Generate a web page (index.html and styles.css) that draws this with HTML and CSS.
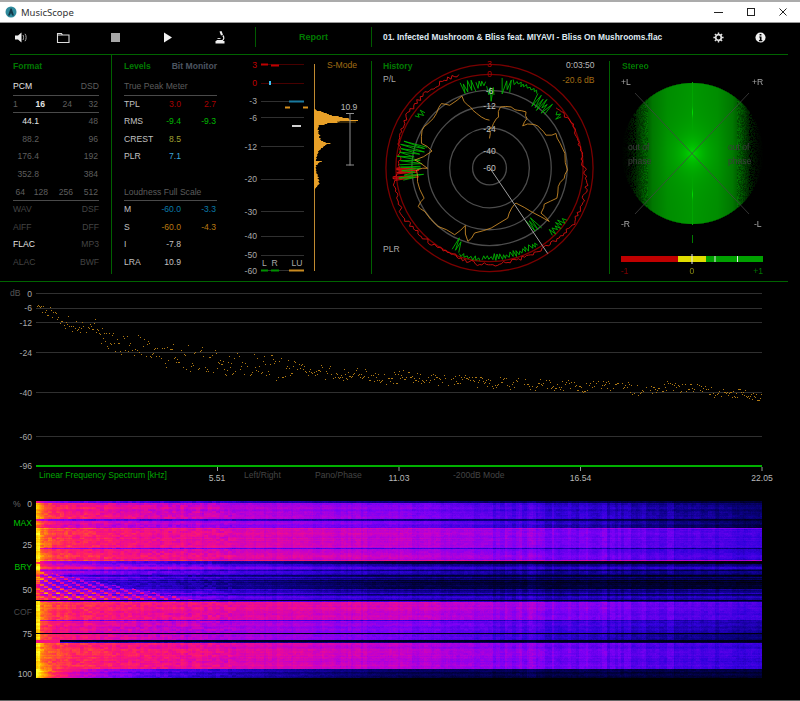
FILE: index.html
```html
<!DOCTYPE html>
<html lang="en">
<head>
<meta charset="utf-8">
<title>MusicScope</title>
<link rel="stylesheet" href="styles.css">
</head>
<body>
<div class="window">
  <header class="titlebar">
    <svg class="app-icon" viewBox="0 0 12 12"><circle cx="6" cy="6" r="5.5" fill="#2f8a9c"/><path d="M3 9.5 5.5 2.5h1.2L9 9.5H7.2L6 7 4.8 9.5z" fill="#123a4a"/></svg>
    <span class="app-name">MusicScope</span>
    <div class="win-controls">
      <svg class="win-btn" viewBox="0 0 32 20"><path d="M11 10.500h9" stroke="#222" fill="none"/></svg>
      <svg class="win-btn" viewBox="0 0 32 20"><rect x="12.500" y="6.500" width="7" height="7" stroke="#222" fill="none"/></svg>
      <svg class="win-btn" viewBox="0 0 32 20"><path d="M12.500 6.500l7 7M19.500 6.500l-7 7" stroke="#222" fill="none"/></svg>
    </div>
  </header>

  <nav class="toolbar">
    <div class="tool t-speaker"><svg class="icon" viewBox="0 0 14 13"><path d="M1 4.500h3l3.500-3v10L4 8.500H1z" fill="#eee"/><path d="M9 4c.8 1.400.8 3.600 0 5M11 2.800c1.500 2 1.500 5.400 0 7.400" stroke="#aaa" fill="none"/></svg></div>
    <div class="tool t-folder"><svg class="icon" viewBox="0 0 14 13"><path d="M1.500 11.500v-9h4l1 1.500h6.500v7.500z M1.500 4h12" stroke="#ddd" fill="none" stroke-width="1.100"/></svg></div>
    <div class="tool t-stop"><span class="stop-square"></span></div>
    <div class="tool t-play"><svg class="icon" viewBox="0 0 14 13"><path d="M3 1.500l8 5-8 5z" fill="#f2f2f2"/></svg></div>
    <div class="tool t-micro"><svg class="icon" viewBox="0 0 14 13"><path d="M6.500.5l2-.5 1.500 3.800-2 .8z" fill="#eee"/><path d="M9.800 4.500c1.600 1.800 1.200 4-.3 5H3.500" stroke="#eee" fill="none" stroke-width="1.200"/><path d="M2.500 10h9v2.500h-9z" fill="#eee"/><path d="M4.500 7.500h3" stroke="#ccc"/></svg></div>
    <div class="tool t-report">Report</div>
    <div class="tool t-title">01. Infected Mushroom &amp; Bliss feat. MIYAVI - Bliss On Mushrooms.flac</div>
    <div class="tool t-gear"><svg class="icon-sm" viewBox="0 0 14 14"><circle cx="7" cy="7" r="3.600" fill="none" stroke="#ddd" stroke-width="2.200"/><path d="M7 .5v2.500M7 11v2.500M.5 7H3M11 7h2.500M2.400 2.400l1.800 1.800M9.800 9.800l1.800 1.800M11.600 2.400 9.800 4.200M4.200 9.800l-1.800 1.800" stroke="#ddd" stroke-width="1.800"/></svg></div>
    <div class="tool t-info"><svg class="icon-sm" viewBox="0 0 12 12"><circle cx="6" cy="6" r="5.500" fill="#f2f2f2"/><path d="M5 2.200h2v1.700H5zM4.600 5h2.500v3.800h.9V10H4.300V8.800h1V6.100h-.7z" fill="#000"/></svg></div>
  </nav>

  <section class="panels">
    <div class="format">
      <h2 class="head">Format</h2>
      <div class="row two rule"><span class="on">PCM</span><span class="dim">DSD</span></div>
      <div class="row bits rule"><span class="dim">1</span><span class="on b">16</span><span class="dim">24</span><span class="dim">32</span></div>
      <div class="row rate"><span class="on">44.1</span><span class="dim">48</span></div>
      <div class="row rate"><span class="dim">88.2</span><span class="dim">96</span></div>
      <div class="row rate"><span class="dim">176.4</span><span class="dim">192</span></div>
      <div class="row rate"><span class="dim">352.8</span><span class="dim">384</span></div>
      <div class="row dsd rule"><span class="dim">64</span><span class="dim">128</span><span class="dim">256</span><span class="dim">512</span></div>
      <div class="row two"><span class="off">WAV</span><span class="off">DSF</span></div>
      <div class="row two"><span class="off">AIFF</span><span class="off">DFF</span></div>
      <div class="row two"><span class="on">FLAC</span><span class="off">MP3</span></div>
      <div class="row two"><span class="off">ALAC</span><span class="off">BWF</span></div>
    </div>

    <div class="levels">
      <div class="head-row"><h2 class="head">Levels</h2><h2 class="head mute">Bit Monitor</h2></div>
      <div class="row sub rule">True Peak Meter</div>
      <div class="row val"><span class="lab">TPL</span><span class="red">3.0</span><span class="red">2.7</span></div>
      <div class="row val"><span class="lab">RMS</span><span class="green">-9.4</span><span class="green">-9.3</span></div>
      <div class="row val"><span class="lab">CREST</span><span class="olive">8.5</span><span></span></div>
      <div class="row val"><span class="lab">PLR</span><span class="sky">7.1</span><span></span></div>
      <div class="row val"></div>
      <div class="row sub rule">Loudness Full Scale</div>
      <div class="row val"><span class="lab">M</span><span class="teal">-60.0</span><span class="teal">-3.3</span></div>
      <div class="row val"><span class="lab">S</span><span class="amber">-60.0</span><span class="amber">-4.3</span></div>
      <div class="row val"><span class="lab">I</span><span class="lab">-7.8</span><span></span></div>
      <div class="row val"><span class="lab">LRA</span><span class="lab">10.9</span><span></span></div>
    </div>

    <svg class="meter" viewBox="217 55 154 225">
      <g class="grid">
        <path class="gline red-line" d="M261 64.500h43M261 83.500h43"/>
        <path class="gline" d="M261 101.500h43M261 117.500h43M261 146.500h43M261 179.500h43M261 211.500h43M261 236.500h43M261 255.500h43M261 270.500h43"/>
      </g>
      <g class="tick-labels">
        <text class="t-red" x="257" y="68">3</text><text class="t-red" x="257" y="86">0</text>
        <text x="257" y="104">-3</text><text x="257" y="121">-6</text><text x="257" y="150">-12</text>
        <text x="257" y="182">-20</text><text x="257" y="215">-30</text><text x="257" y="239">-40</text>
        <text x="257" y="258">-50</text><text x="257" y="274">-60</text>
      </g>
      <path class="seg" stroke="#c00000" d="M261 64.500h7M271 65.500h8"/>
      <rect x="269" y="81" width="2" height="4" fill="#40c0f0"/>
      <path class="seg" stroke="#1a7aa0" d="M289 101.500h15"/>
      <path class="seg" stroke="#d8901c" d="M285 107.500h5M303 107.500h5"/>
      <path class="seg" stroke="#d0d0d0" d="M292 126h9"/>
      <path class="seg" stroke="#009000" d="M261 270.500h7M271 270.500h8"/>
      <path class="seg" stroke="#c88a20" d="M289 270.500h15"/>
      <text class="m-txt" x="262" y="266">L</text><text class="m-txt" x="271.500" y="266">R</text><text class="m-txt" x="291.500" y="266">LU</text>
      <path class="axis" d="M314.500 64v207"/>
      <text class="smode" x="327" y="68">S-Mode</text>
      <polygon id="histogram" fill="#e8a028"/>
      <path class="hist-tip" d="M337 122h19"/>
      <path class="bracket" d="M350 113.500v52M346 113.500h8M346 165h8"/>
      <text class="m-val" x="349" y="110" text-anchor="middle">10.9</text>
    </svg>

    <svg class="history" viewBox="372 55 238 225">
      <g class="rings">
        <circle cx="490" cy="168" r="17"/><circle cx="490" cy="168" r="40"/><circle cx="490" cy="168" r="62"/><circle cx="490" cy="168" r="78"/>
      </g>
      <g class="rings red-rings">
        <circle cx="490" cy="168" r="94"/><circle cx="490" cy="168" r="104"/>
      </g>
      <path id="traceRed" class="trace" stroke="#d81010"/>
      <path id="traceGreen" class="trace" stroke="#00b400"/>
      <path id="traceOrange" class="trace" stroke="#c88a28"/>
      <path class="hand" d="M491 169 548.500 254"/>
      <g class="ring-labels" text-anchor="middle">
        <text class="t-red" x="490" y="67">3</text><text class="t-red" x="490" y="77">0</text>
        <text x="490" y="94">-6</text><text x="490" y="109">-12</text><text x="490" y="132">-24</text>
        <text x="490" y="154">-40</text><text x="490" y="171">-60</text>
      </g>
      <text class="svg-head" x="383" y="69">History</text>
      <text class="m-txt" x="383" y="82">P/L</text>
      <text class="m-txt" x="383" y="252">PLR</text>
      <text class="m-val" x="595.500" y="68" text-anchor="end">0:03:50</text>
      <text class="smode" x="595.500" y="83" text-anchor="end">-20.6 dB</text>
    </svg>

    <div class="stereo">
      <canvas id="vector" class="vector" width="150" height="150"></canvas>
      <svg class="stereo-over" viewBox="611 55 189 225">
        <path class="cross" d="M636 93 750 214M750 93 636 214"/>
        <text class="svg-head" x="623" y="69">Stereo</text>
        <text class="m-txt" x="622" y="85">+L</text><text class="m-txt" x="753" y="85">+R</text>
        <text class="m-txt" x="622" y="227">-R</text><text class="m-txt" x="755" y="227">-L</text>
        <text class="phase" x="629" y="150">out of</text><text class="phase" x="629" y="164">phase</text>
        <text class="phase" x="729" y="150">out of</text><text class="phase" x="729" y="164">phase</text>
        <path class="centre-mark" d="M693.500 235v8"/>
        <rect x="622" y="256" width="57" height="6" fill="#c00000"/>
        <rect x="679" y="256" width="28" height="6" fill="#e0dc00"/>
        <rect x="707" y="256" width="57" height="6" fill="#00a000"/>
        <path class="bar-tick" d="M693 254v10"/>
        <path class="bar-tick" d="M716 256v6M738.500 256v6"/>
        <text class="t-dred" x="622" y="274">-1</text>
        <text class="t-olive" x="693" y="274" text-anchor="middle">0</text>
        <text class="t-dgreen" x="764" y="274" text-anchor="end">+1</text>
      </svg>
    </div>
  </section>

  <section class="spectrum">
    <svg class="spectrum-plot" viewBox="0 282 800 214">
      <path class="gline" d="M36 293.500h726M36 308.500h726M36 322.500h726M36 352.500h726M36 392.500h726M36 436.500h726"/>
      <g class="tick-labels">
        <text x="32" y="297">0</text><text x="32" y="311">-6</text><text x="32" y="326">-12</text>
        <text x="32" y="356">-24</text><text x="32" y="396">-40</text><text x="32" y="440">-60</text><text x="32" y="469">-96</text>
      </g>
      <text class="m-dim" x="10" y="296">dB</text>
      <path id="dots" fill="#b07a14"/>
      <path class="base" d="M36 466h726"/>
      <path class="xtick" d="M217.500 467v4M399 467v4M580.500 467v4M762 467v4"/>
      <text class="spec-name" x="39" y="478">Linear Frequency Spectrum [kHz]</text>
      <text class="m-val" x="217" y="481" text-anchor="middle">5.51</text>
      <text class="m-val" x="399" y="481" text-anchor="middle">11.03</text>
      <text class="m-val" x="580.500" y="481" text-anchor="middle">16.54</text>
      <text class="m-val" x="762" y="481" text-anchor="middle">22.05</text>
      <text class="m-off" x="244" y="478">Left/Right</text>
      <text class="m-off" x="315" y="478">Pano/Phase</text>
      <text class="m-off" x="453" y="478">-200dB Mode</text>
    </svg>
  </section>

  <section class="sgram">
    <div class="sgram-axis">
      <div class="pct"><span class="pct-sign">%</span><span>0</span></div>
      <span class="ax-green">MAX</span>
      <span>25</span>
      <span class="ax-green">BRY</span>
      <span>50</span>
      <span class="ax-off">COF</span>
      <span>75</span>
      <span class="ax-last">100</span>
    </div>
    <canvas id="sgram" class="sgram-canvas" width="726" height="177"></canvas>
  </section>
  <div class="bottom-edge"></div>
</div>
<script src="app.js"></script>
</body>
</html>
```
FILE: styles.css
```css
* { box-sizing: border-box; }
html, body { margin: 0; padding: 0; background: #000; }
body { width: 800px; height: 701px; overflow: hidden; font: 8.600px/1 "Liberation Sans", Arial, sans-serif; color: #bbb; }
.window { display: flex; flex-direction: column; height: 701px; position: relative; }
h2 { margin: 0; font: inherit; }
svg text { font-size: 8.600px; }

.titlebar { height: 23px; flex: none; background: #fff; border-top: 2px solid #ababab; border-bottom: 1px solid #999; display: flex; align-items: center; padding-left: 5px; color: #333; font: 9.500px "Noto Sans", sans-serif; }
.app-icon { width: 12px; height: 12px; margin-right: 4px; }
.win-controls { margin-left: auto; display: flex; }
.win-btn { width: 32px; height: 20px; }
.win-btn:last-child { margin-right: 1px; }

.toolbar { height: 32px; flex: none; display: flex; align-items: center; position: relative; }
.toolbar::after { content: ""; position: absolute; left: 10px; right: 12px; bottom: 0; height: 1px; background: #006400; }
.tool { display: flex; align-items: center; justify-content: center; height: 20px; margin-bottom: 4px; flex: none; }
.icon { width: 14px; height: 13px; }
.icon-sm { width: 11px; height: 11px; }
.t-speaker { width: 41px; }
.t-folder { width: 44px; }
.t-stop { width: 60px; }
.stop-square { width: 9px; height: 9px; background: #a8a8a8; }
.t-play { width: 46px; }
.t-micro { width: 58px; }
.t-report { margin-left: 6px; width: 117px; border-left: 1px solid #005a00; border-right: 1px solid #005a00; color: #007a00; font-weight: 700; font-size: 9px; }
.t-title { justify-content: flex-start; width: 328px; padding-left: 11px; color: #dfe8f0; font-weight: 700; font-size: 8.400px; white-space: nowrap; }
.t-gear { width: 36px; }
.t-info { width: 48px; }

.panels { height: 227px; flex: none; display: flex; border-bottom: 1px solid #006400; margin: 0 12px 0 0; align-items: stretch; position: relative; }
.format { width: 111px; padding: 7px 12px 0 13px; margin-bottom: 7px; flex: none; }
.levels { width: 106px; padding: 7px 0 0 12px; margin-bottom: 7px; border-left: 1px solid #006000; flex: none; }
.head { color: #007a00; font-weight: 700; height: 8px; line-height: 8px; font-size: 8.600px; }
.head.mute { color: #4c5560; }
.head-row { display: flex; justify-content: space-between; }
.row { height: 17.600px; line-height: 17.600px; white-space: nowrap; font-size: 8.600px; }
.format .row:nth-child(2), .levels .row:nth-child(2) { margin-top: 8px; }
.rule { border-bottom: 1px solid #4a4a4a; }
.two { display: flex; justify-content: space-between; }
.bits, .rate, .dsd { display: grid; text-align: right; }
.bits { grid-template-columns: 4px 28px 27px 26px; }
.rate { grid-template-columns: 26px 59px; }
.dsd { grid-template-columns: 12px 23px 25px 25px; }
.on { color: #e4e4e4; }
.b { font-weight: 700; }
.dim { color: #5e5e5e; }
.off { color: #444; }
.sub { color: #5c5c5c; }
.val { display: grid; grid-template-columns: 22px 35px 35px; text-align: right; }
.val > span:first-child { text-align: left; }
.lab { color: #c0c0c0; }
.red { color: #a80000; }
.green { color: #00b800; }
.olive { color: #a0a030; }
.sky { color: #3fa6dc; }
.teal { color: #0a7aa8; }
.amber { color: #b87810; }

.meter { width: 154px; height: 225px; flex: none; display: block; }
.gline { stroke: #303030; fill: none; }
.red-line { stroke: #480000; }
.tick-labels text { fill: #a8a8a8; text-anchor: end; }
.tick-labels .t-red { fill: #c00000; }
.seg { fill: none; stroke-width: 2; }
.m-txt { fill: #a8a8a8; }
.m-val { fill: #b8b8b8; }
.m-dim { fill: #555; }
.m-off { fill: #444; }
.axis { stroke: #c08a30; fill: none; }
.smode { fill: #a06c14; }
.hist-tip { stroke: #6a4c10; fill: none; }
.bracket { stroke: #909090; fill: none; }

.history { width: 238px; height: 225px; flex: none; display: block; border-left: 1px solid #006000; border-image: linear-gradient(#000 0 7px, #006000 7px 218px, #000 218px) 1; overflow: hidden; }
.rings circle { fill: none; stroke: #4c4c4c; stroke-width: 1.300; }
.red-rings circle { stroke: #7a0000; }
.trace { fill: none; stroke-width: .9; }
.hand { stroke: #a0a0a0; fill: none; }
.ring-labels text { fill: #c0c0c0; }
.ring-labels .t-red { fill: #a80000; }
.svg-head { fill: #007a00; font-weight: 700; }

.stereo { flex: 1; position: relative; border-left: 1px solid #006000; border-image: linear-gradient(#000 0 7px, #006000 7px 218px, #000 218px) 1; margin-right: -12px; }
.vector { position: absolute; left: 7px; top: 23px; width: 150px; height: 150px; }
.stereo-over { position: absolute; left: 0; top: 0; width: 189px; height: 225px; }
.cross { stroke: rgba(70,70,70,.75); fill: none; }
.phase { fill: #3c3c3c; }
.centre-mark { stroke: #007a00; fill: none; }
.bar-tick { stroke: #e8e8e8; fill: none; }
.t-dred { fill: #800000; }
.t-olive { fill: #8a8a10; }
.t-dgreen { fill: #007a00; }

.spectrum { height: 214px; flex: none; }
.spectrum-plot { width: 800px; height: 214px; display: block; }
.base { stroke: #00b000; stroke-width: 2; fill: none; }
.xtick { stroke: #9a9a9a; fill: none; }
.spec-name { fill: #00a800; }

.sgram { height: 200px; flex: none; display: flex; padding-top: 5px; }
.sgram-axis { width: 36px; height: 180px; flex: none; padding-right: 4px; display: flex; flex-direction: column; align-items: flex-end; font-size: 8.600px; color: #b0b0b0; line-height: 9px; gap: 13.200px; }
.pct { width: 100%; display: flex; justify-content: space-between; padding-left: 13px; margin-top: -1px; margin-bottom: -3.200px; }
.pct-sign { color: #666; }
.ax-green { color: #00c000; }
.ax-off { color: #4a4a4a; }
.ax-last { margin-top: 17.800px; }
.sgram-canvas { width: 726px; height: 177px; display: block; flex: none; }
.bottom-edge { position: absolute; left: 0; right: 0; bottom: 0; height: 1px; background: #666; }
```
FILE: app.js
```js
(function () {
  function rng(seed) {
    return function () {
      seed |= 0; seed = seed + 0x6D2B79F5 | 0;
      var t = Math.imul(seed ^ seed >>> 15, 1 | seed);
      t = t + Math.imul(t ^ t >>> 7, 61 | t) ^ t;
      return ((t ^ t >>> 14) >>> 0) / 4294967296;
    };
  }
  function interp(keys, x) {
    if (x <= keys[0][0]) return keys[0][1];
    for (var i = 1; i < keys.length; i++) {
      if (x <= keys[i][0]) {
        var a = keys[i - 1], b = keys[i];
        return a[1] + (b[1] - a[1]) * (x - a[0]) / (b[0] - a[0]);
      }
    }
    return keys[keys.length - 1][1];
  }

  /* level histogram */
  var H0 = rng(5);
  var hist = [[108,0],[110,3],[112,11],[114,14],[116,22],[117,31],[119,33],[120,42],[121,30],[122,24],[123,14],[125,5],[127,4],[133,5],[138,6],[141,8],[143,17],[145,10],[150,5],[155,3],[160,2],[161,7],[165,2],[170,2],[176,4],[183,5],[187,2],[190,0]];
  var pts = ['314,108'];
  for (var hy = 108; hy <= 190; hy++) {
    var w = interp(hist, hy);
    w = Math.max(0, w * (.85 + H0() * .3));
    pts.push((314 + w).toFixed(1) + ',' + hy, (314 + w).toFixed(1) + ',' + (hy + 1));
  }
  pts.push('314,190');
  document.getElementById('histogram').setAttribute('points', pts.join(' '));

  /* history traces, clockwise degrees from 12 o'clock */
  var cx = 490, cy = 168, R = rng(11);
  function pt(deg, r) {
    var a = deg * Math.PI / 180;
    return (cx + Math.sin(a) * r).toFixed(1) + ' ' + (cy - Math.cos(a) * r).toFixed(1);
  }
  var red = '', first = true;
  for (var d = 48; d <= 342; d += 1.300) {
    var base = interp([[48,90],[60,94],[85,93],[100,99],[125,101],[150,96],[185,97],[205,94],[240,99],[262,97],[272,90],[300,98],[342,99]], d);
    var r = base + (R() - .5) * 4;
    red += (first ? 'M' : 'L') + pt(d, r);
    first = false;
    if (d > 262 && d < 271 && R() < .6) { red += 'L' + pt(d + .4, 70 + R() * 5) + 'L' + pt(d + .8, r); }
  }
  document.getElementById('traceRed').setAttribute('d', red);

  var greens = [[-19,-9,76,92],[-9,-2,80,88],[-2,4,66,84],[8,15,72,92],[15,33,87,92],[33,46,73,90],[50,55,82,90],[124,137,86,94],[139,146,60,82],[148,186,86,93],[186,200,89,94],[200,206,70,92],[272,289,66,94],[262,272,66,92],[305,311,84,92]];
  var green = '';
  greens.forEach(function (g) {
    var start = true, a = g[0], hi = false;
    while (a <= g[1]) {
      hi = !hi;
      var span = g[3] - g[2];
      var rr = hi ? g[3] - R() * span * .25 : g[2] + R() * span * .45;
      green += (start ? 'M' : 'L') + pt(a, rr);
      start = false;
      a += .7 + R() * 1.100;
    }
  });
  document.getElementById('traceGreen').setAttribute('d', green);

  var orangeZoom = [[345,250],[345,222],[352,218],[366,190],[372,185],[378,155],[410,155],[430,165],[455,170],[458,190],[445,212],[480,208],[500,222],[515,240],[545,235],[558,265],[572,295],[580,345],[570,370],[552,395],[548,430],[510,448],[500,475],[525,500],[470,470],[425,445],[412,460],[400,490],[350,520],[300,535],[280,560],[272,512],[240,540],[190,515],[150,470],[130,455],[148,430],[128,380],[125,345],[158,340],[120,315],[172,288],[140,265],[142,225],[160,205],[185,175],[200,145],[225,150],[262,122],[280,150],[295,165],[320,185],[345,195]];
  document.getElementById('traceOrange').setAttribute('d', orangeZoom.map(function (p, i) {
    var next = orangeZoom[i + 1];
    var x = p[0] / 3 + 375, y = p[1] / 3 + 55, s = (i ? 'L' : 'M') + x.toFixed(1) + ' ' + y.toFixed(1);
    if (next) {
      var mx = (p[0] + next[0]) / 6 + 375 + (R() - .5) * 2.500, my = (p[1] + next[1]) / 6 + 55 + (R() - .5) * 2.500;
      s += 'L' + mx.toFixed(1) + ' ' + my.toFixed(1);
    }
    return s;
  }).join(''));

  /* spectrum dots */
  var curve = [[36,305],[45,312],[60,320],[80,325],[95,325],[100,335],[130,345],[160,352],[200,360],[260,365],[300,370],[400,378],[500,383],[600,386],[700,390],[762,397]];
  var dots = '', S = rng(7), walk = 0;
  for (var x = 36; x < 762; x += 1) {
    walk = walk * .9 + (S() - .5) * 2.200;
    if (S() < .18) continue;
    var spread = interp([[36,6],[60,12],[100,20],[150,24],[280,26],[300,12],[500,12],[762,8]], x);
    var y = interp(curve, x) + (S() - .5) * spread + walk;
    dots += 'M' + x + ' ' + Math.round(y) + 'h1v1h-1z';
  }
  document.getElementById('dots').setAttribute('d', dots);

  /* stereo vector cloud: canvas covers x 618..768, y 78..228 */
  var vc = document.getElementById('vector').getContext('2d');
  var vi = vc.createImageData(150, 150), V = rng(3);
  var fade = [[0,150],[25,140],[40,118],[48,80],[56,38],[62,18],[67,5],[72,0]];
  for (var py = 0; py < 150; py++) {
    for (var px = 0; px < 150; px++) {
      var dx = px - 75, dy = py - 75, dist = Math.hypot(dx, dy);
      if (dist > 71) continue;
      var ax = Math.abs(dx);
      var g = interp(fade, ax) + 70 * Math.exp(-dist / 14);
      if (ax > 44) g *= .7 + V() * .6;
      if (ax > 56 && V() < .35) g = 0;
      g *= Math.min(1, (71 - dist) / 1.500 + .3);
      if (ax < 1) g = Math.max(g, 165 + 50 * Math.exp(-Math.pow((Math.abs(dy) - 41) / 4, 2)));
      var o = (py * 150 + px) * 4;
      vi.data[o + 1] = Math.min(255, g);
      vi.data[o + 3] = 255;
    }
  }
  vc.putImageData(vi, 0, 0);

  /* spectrogram */
  var sc = document.getElementById('sgram').getContext('2d');
  var W = 726, H = 177, img = sc.createImageData(W, H), Q = rng(23);
  var bands = [
    [501,503,.42,.18,.07],[503,519,.67,.45,.15],[519,521,.42,.2,.06],[521,528,.6,.42,.11],
    [528,529,.74,.58,.44],[529,548,.7,.55,.33],[548,549,.5,.36,.18],[549,560,.7,.55,.31],
    [560,561,.76,.66,.56],[561,564,.55,.12,.05],[564,569,.6,.27,.22],[569,575,.48,.24,.16],
    [575,578,.42,.17,.1],[578,589,.4,.13,.08],[589,595,.46,.22,.2],[595,600,.56,.32,.27],
    [600,601,.05,.05,.05],[601,602,.5,.3,.15],[602,620,.7,.58,.34],[620,621,.42,.3,.22],[621,633,.64,.46,.24],
    [633,634,.03,.03,.03],[634,640,.68,.44,.17],[640,642,.06,.05,.04],[642,643,.3,.18,.08],[643,669,.72,.55,.31],
    [669,672,.5,.15,.1],[672,678,.46,.12,.08]
  ];
  var stops = [[0,0,0,0],[.1,0,0,60],[.2,10,0,130],[.32,50,0,220],[.45,125,0,245],[.55,190,0,210],[.63,235,10,150],[.7,255,30,100],[.78,255,90,40],[.86,255,160,0],[.93,255,215,0],[1,255,255,40]];
  function color(v) {
    v = Math.max(0, Math.min(1, v));
    for (var i = 1; i < stops.length; i++) {
      if (v <= stops[i][0]) {
        var a = stops[i - 1], b = stops[i], t = (v - a[0]) / (b[0] - a[0]);
        return [a[1] + (b[1] - a[1]) * t, a[2] + (b[2] - a[2]) * t, a[3] + (b[3] - a[3]) * t];
      }
    }
    return [255, 255, 40];
  }
  var cols = [], colv = 0, colw = 0;
  for (var c = 0; c < W; c++) {
    if (colw-- <= 0) { colv = Q() - .5; colw = 1 + Math.floor(Q() * 4); }
    cols.push(colv);
  }
  var blocks = [];
  for (var bi = 0; bi < 190 * 90; bi++) blocks.push(Q() - .5);
  var rowWalk = 0;
  for (var row = 0; row < H; row++) {
    var yy = row + 501, band = bands[0];
    for (var b = 0; b < bands.length; b++) if (yy >= bands[b][0] && yy < bands[b][1]) band = bands[b];
    rowWalk = rowWalk * .5 + (Q() - .5) * .045;
    var rowN = rowWalk + (Q() - .5) * ((yy > 563 && yy < 600) ? .16 : .012);
    var dark = band[2] < .2;
    for (var cl = 0; cl < W; cl++) {
      var t = cl / W;
      var v = t < .5 ? band[2] + (band[3] - band[2]) * Math.pow(t / .5, .85)
                     : band[3] + (band[4] - band[3]) * ((t - .5) / .5);
      if (!dark) v += .17 * Math.exp(-cl / 7) + .06 * Math.exp(-cl / 40);
      if (!dark && cl < 4 && yy > 530 && yy < 669 && !(yy > 561 && yy < 564) && !(yy > 582 && yy < 600)) v = Math.max(v, .96);
      var blk = blocks[(cl >> 2) + (row >> 1) * 190];
      v += blk * (cl < 200 ? .07 : .028) * (dark ? .2 : 1);
      var lim = (yy - 570) * 5.400;
      if (yy >= 570 && yy < 600 && cl < lim) {
        var chk = ((cl >> 2) + (yy >> 1) * 2) % 3 === 0 ? .3 : .05;
        v = Math.min(v + chk * (1 - cl / Math.max(lim, 1) * .4), .8);
      }
      if (yy >= 640 && yy < 643 && cl < 24) v = .66;
      if (yy >= 669) { v += .32 * Math.exp(-cl / 55); }
      var amp = t > .62 && t < .88 ? .075 : .035;
      if (!dark) v += cols[cl] * amp * (band[3] > .2 ? 1 : .4) + rowN;
      v += (Q() - .5) * .025;
      if (cl > 490 && cl < 500) v += .035;
      var col = color(v), oo = (row * W + cl) * 4;
      img.data[oo] = col[0]; img.data[oo + 1] = col[1]; img.data[oo + 2] = col[2]; img.data[oo + 3] = 255;
    }
  }
  sc.putImageData(img, 0, 0);
})();
```
